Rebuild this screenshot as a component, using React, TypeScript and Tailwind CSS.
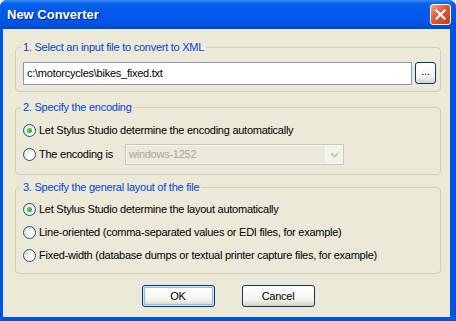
import React from 'react';

const font = "font-['Tahoma','Liberation_Sans',sans-serif]";

function Radio({ checked, label }: { checked?: boolean; label: string }) {
  return (
    <label className="flex items-center h-[23px]">
      <span className="relative w-[13px] h-[13px] rounded-full border border-[#1c5180] bg-[radial-gradient(circle_at_70%_70%,#ffffff_20%,#dcdad0_100%)] flex items-center justify-center">
        {checked && (
          <span className="w-[5px] h-[5px] rounded-full bg-[radial-gradient(circle_at_35%_35%,#63d463,#1a9a1a)]" />
        )}
      </span>
      <span className="ml-[3px]">{label}</span>
    </label>
  );
}

function Group({ title, className, children }: { title: string; className: string; children: React.ReactNode }) {
  return (
    <div className={`relative border border-[#d0d0bf] rounded-[4px] ${className}`}>
      <span className="absolute -top-[8px] left-[5px] bg-[#ece9d8] px-[2px] text-[#0046d5] leading-[14px]">
        {title}
      </span>
      {children}
    </div>
  );
}

function XpButton({ children, def }: { children: React.ReactNode; def?: boolean }) {
  return (
    <button
      className={`w-[73px] h-[22px] rounded-[3px] border border-[#003c74] bg-[linear-gradient(#ffffff,#f3f3ef_70%,#d6d0c5)] text-black leading-none ${
        def ? 'shadow-[inset_0_0_0_1px_#cee7ff,inset_0_0_0_2px_#98b8ea]' : ''
      }`}
    >
      {children}
    </button>
  );
}

export default function App() {
  return (
    <div className={`w-[456px] h-[321px] flex flex-col rounded-t-[7px] bg-[#0054e3] text-[11px] tracking-[-0.25px] text-black ${font}`}>
      <div className="h-[29px] flex items-center justify-between pl-[7px] pr-[5px] rounded-t-[7px] bg-[linear-gradient(#3c8ff7_0%,#0a62ea_12%,#0058ec_40%,#0056e6_75%,#0048d0_100%)]">
        <span className="text-white font-bold text-[13px] tracking-normal font-['Liberation_Sans',sans-serif] [text-shadow:1px_1px_#0a1e8a]">
          New Converter
        </span>
        <span className="w-[21px] h-[21px] rounded-[3px] border border-white bg-[linear-gradient(135deg,#f0a486,#de5a36_45%,#c5401b)] flex items-center justify-center">
          <svg width="11" height="11" viewBox="0 0 11 11">
            <path d="M1.5 1.5 L9.5 9.5 M9.5 1.5 L1.5 9.5" stroke="#fff" strokeWidth="2.2" strokeLinecap="square" />
          </svg>
        </span>
      </div>

      <div className="flex-1 ml-[3px] mr-[6px] mb-[4px] bg-[#ece9d8] pt-[18px] pl-[12px] pr-[9px]">
        <Group title="1. Select an input file to convert to XML" className="h-[45px] pt-[14px] pl-[7px] pr-[4px]">
          <div className="flex items-start">
            <div className="w-[389px] h-[23px] border border-[#7f9db9] bg-white flex items-center pl-[3px]">
              c:\motorcycles\bikes_fixed.txt
            </div>
            <button className="ml-[3px] w-[21px] h-[22px] rounded-[3px] border border-[#003c74] bg-[linear-gradient(#ffffff,#f3f3ef_70%,#d6d0c5)] leading-none pb-[3px]">
              ...
            </button>
          </div>
        </Group>

        <Group title="2. Specify the encoding" className="mt-[15px] h-[68px] pt-[11px] pl-[7px]">
          <Radio checked label="Let Stylus Studio determine the encoding automatically" />
          <div className="flex items-center mt-[1px] h-[23px]">
            <div className="w-[102px]">
              <Radio label="The encoding is" />
            </div>
            <div className="w-[219px] h-[21px] border border-[#c9c7ba] flex items-stretch">
              <div className="flex-1 border border-[#f7f6f1] flex items-center pl-[2px] text-[#aca899]">windows-1252</div>
              <div className="w-[17px] border border-[#f7f6f1] bg-[#f2f1ea] flex items-center justify-center">
                <svg width="9" height="6" viewBox="0 0 9 6">
                  <path d="M1 1 L4.5 4.5 L8 1" stroke="#c9c7ba" strokeWidth="2" fill="none" />
                </svg>
              </div>
            </div>
          </div>
        </Group>

        <Group title="3. Specify the general layout of the file" className="mt-[12px] h-[87px] pt-[10px] pl-[7px]">
          <Radio checked label="Let Stylus Studio determine the layout automatically" />
          <Radio label="Line-oriented (comma-separated values or EDI files, for example)" />
          <Radio label="Fixed-width (database dumps or textual printer capture files, for example)" />
        </Group>

        <div className="mt-[11px] flex justify-center gap-[27px]">
          <XpButton def>OK</XpButton>
          <XpButton>Cancel</XpButton>
        </div>
      </div>
    </div>
  );
}
